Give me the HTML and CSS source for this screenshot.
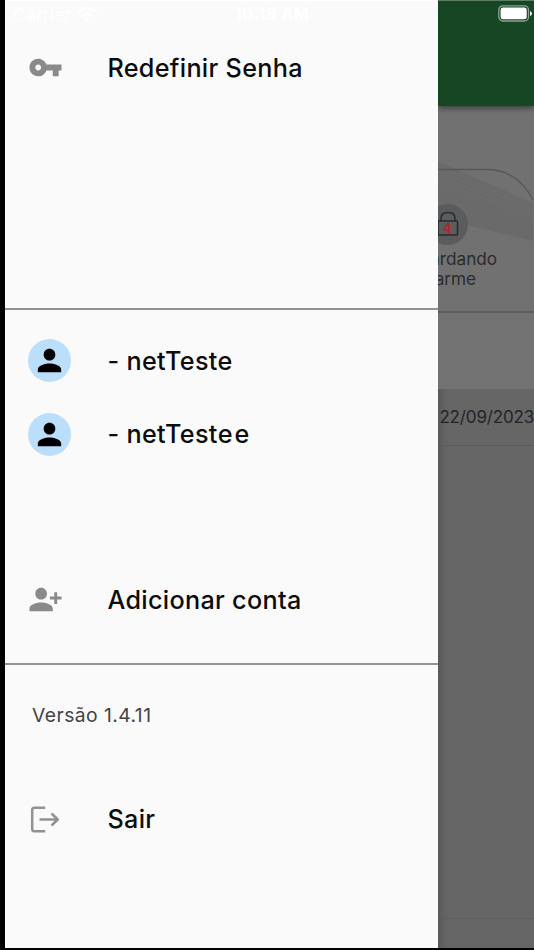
FILE: index.html
```html
<!DOCTYPE html>
<html lang="pt-BR">
<head>
    <meta charset="UTF-8">
    <meta name="viewport" content="width=device-width, initial-scale=1.0">
    <title>Menu</title>
    <link rel="stylesheet" href="styles.css">
</head>
<body>
    <div class="screen">
        <!-- Side menu -->
        <nav class="drawer">
            <div class="status">
                <span class="carrier">Carrier</span>
                <svg class="wifi" viewBox="0 0 20 14"><path d="M0 4Q10-4 20 4L18 6Q10 0 2 6ZM4 8Q10 3 16 8L14 10Q10 7 6 10ZM7.500 11.500Q10 9.500 12.500 11.500L10 14Z"/></svg>
                <span class="clock">10:18 AM</span>
            </div>
            <section class="group group-top">
                <a class="item">
                    <span class="icon"><svg viewBox="0 0 24 24"><path d="M12.650 10C11.830 7.670 9.610 6 7 6c-3.310 0-6 2.690-6 6s2.690 6 6 6c2.610 0 4.830-1.670 5.650-4H17v4h4v-4h2v-4H12.650zM7 14c-1.100 0-2-.9-2-2s.9-2 2-2 2 .9 2 2-.9 2-2 2z"/></svg></span>
                    <span>Redefinir Senha</span>
                </a>
            </section>
            <section class="group group-accounts">
                <a class="item">
                    <span class="avatar"><svg viewBox="0 0 24 24"><path d="M12 12c2.210 0 4-1.790 4-4s-1.790-4-4-4-4 1.790-4 4 1.790 4 4 4zm0 2c-2.670 0-8 1.340-8 4v2h16v-2c0-2.660-5.330-4-8-4z"/></svg></span>
                    <span>- netTeste</span>
                </a>
                <a class="item">
                    <span class="avatar"><svg viewBox="0 0 24 24"><path d="M12 12c2.210 0 4-1.790 4-4s-1.790-4-4-4-4 1.790-4 4 1.790 4 4 4zm0 2c-2.670 0-8 1.340-8 4v2h16v-2c0-2.660-5.330-4-8-4z"/></svg></span>
                    <span>- netTest<span class="wide">e</span>e</span>
                </a>
                <a class="item add">
                    <span class="icon"><svg viewBox="0 0 24 24"><path d="M13 8c0-2.210-1.790-4-4-4S5 5.790 5 8s1.790 4 4 4 4-1.790 4-4zm2 2v2h3v3h2v-3h3v-2h-3V7h-2v3h-3zM1 18v2h16v-2c0-2.660-5.330-4-8-4s-8 1.340-8 4z"/></svg></span>
                    <span>Adicionar conta</span>
                </a>
            </section>
            <section class="group group-bottom">
                <p class="version">Versão 1.4.11</p>
                <a class="item">
                    <span class="icon"><svg class="exit" viewBox="0 0 35 35"><path d="M17.200 5.700H6.500Q4.200 5.700 4.200 8V27Q4.200 29.300 6.500 29.300H17.200M11.500 17.500H29.500M23.500 11.500L29.800 17.500L23.500 23.500"/></svg></span>
                    <span>Sair</span>
                </a>
            </section>
        </nav>

        <!-- Dimmed page behind the menu -->
        <main class="page">
            <header class="appbar">
                <svg class="battery" viewBox="0 0 35 17"><rect class="shell" x="0.800" y="0.800" width="29.700" height="15.200" rx="4"/><rect class="charge" x="2.600" y="2.600" width="26.100" height="11.600" rx="2.500"/><path class="charge" d="M32 6Q34 7 34 8.500Q34 10 32 11Z"/></svg>
            </header>
            <div class="summary">
                <svg class="waves" viewBox="0 0 95 90"><path class="fan" d="M0 1L95 43V81L0 58Z"/><path class="ray" d="M0 1L95 43M0 6L95 46M0 11L95 49M0 16L95 53M0 21L95 57"/><path class="outline" d="M0 9.500H48Q80 9.500 95 40"/></svg>
                <span class="badge"><svg viewBox="0 0 22 26"><path d="M4 10V7Q4 1.500 11 1.500T18 7V10M1.500 10H20Q20.500 10 20.500 11V23Q20.500 24 20 24H1.500Q1 24 1 23V11Q1 10 1.500 10Z"/><text x="10.300" y="21.500">4</text></svg></span>
                <p class="label">Aguardando<br>Alarme</p>
            </div>
            <div class="filters"></div>
            <div class="row">22/09/2023</div>
            <div class="list"></div>
            <footer class="footer"></footer>
        </main>
    </div>
</body>
</html>
```
FILE: styles.css
```css
* {
    box-sizing: border-box;
}
body {
    margin: 0;
    background: #000;
    font-family: Inter, "Liberation Sans", sans-serif;
    overflow: hidden;
}
p {
    margin: 0;
}
.screen {
    display: flex;
    height: 950px;
    padding: 0 0 2px 4.5px;
}
/* Drawer */
.drawer {
    display: flex;
    flex-direction: column;
    flex: 0 0 433.9px;
    background: #fafafa;
    border-top: 1px solid #fff;
}
.status {
    display: flex;
    align-items: center;
    height: 26px;
    padding-left: 9px;
    color: #fff;
    font-size: 17.5px;
}
.carrier {
    width: 63px;
}
.wifi {
    width: 20px;
    height: 14px;
    fill: #fff;
}
.clock {
    margin-left: 138.5px;
    font-size: 17px;
    font-weight: 600;
}
.group {
    border-bottom: 2px solid #929292;
}
.group-top {
    height: 282.5px;
    padding-top: 4px;
}
.group-accounts {
    height: 355.5px;
    padding-top: 14.5px;
}
.group-bottom {
    border: 0;
    padding-top: 36px;
}
.item {
    display: flex;
    align-items: center;
    height: 73.5px;
    padding-left: 23px;
    color: #0c0c0c;
    font-size: 25.2px;
    font-weight: 500;
    letter-spacing: 0.3px;
    white-space: nowrap;
}
.wide {
    letter-spacing: 2px;
}
.icon,
.avatar {
    flex: none;
    margin-right: 37px;
    width: 43px;
    height: 43px;
    display: flex;
    align-items: center;
}
.icon svg,
.avatar svg {
    width: 35px;
    height: 35px;
    fill: #8a8a8a;
}
.avatar {
    justify-content: center;
    border-radius: 50%;
    background: #bbdefb;
}
.avatar svg {
    fill: #000;
}
.icon .exit {
    fill: none;
    stroke: #929292;
    stroke-width: 2.5;
    stroke-linejoin: round;
}
.add {
    margin-top: 92px;
}
.version {
    padding-left: 27.5px;
    color: #444;
    font-size: 19.3px;
    line-height: 28px;
    letter-spacing: 0.45px;
}
.group-bottom .item {
    margin-top: 53.5px;
}
/* Page */
.page {
    display: flex;
    flex-direction: column;
    flex: 1;
    min-width: 0;
    overflow: hidden;
    background: #666;
    color: #242424;
    box-shadow: inset 8px 0 10px -6px rgba(0, 0, 0, 0.2);
}
.appbar {
    display: flex;
    justify-content: flex-end;
    height: 106px;
    flex: none;
    padding: 4px 1px;
    background: #174625;
    border-top: 1px solid #5c7d66;
    box-shadow: 0 2px 6px rgba(0, 0, 0, 0.5);
    z-index: 1;
}
.battery {
    width: 35px;
    height: 17px;
}
.shell {
    fill: none;
    stroke: #8aa292;
    stroke-width: 1.3;
}
.charge {
    fill: #fff;
}
.summary {
    position: relative;
    height: 207px;
    flex: none;
    padding-top: 97.5px;
    background: #717171;
    border-bottom: 2px solid #5c5c5c;
}
.waves {
    position: absolute;
    top: 54px;
    left: 0;
    width: 95px;
    height: 90px;
    overflow: visible;
}
.fan {
    fill: #6a6a6a;
}
.ray {
    fill: none;
    stroke: #727272;
    stroke-width: 0.6;
}
.outline {
    fill: none;
    stroke: #585858;
    stroke-width: 1.3;
}
.badge {
    position: relative;
    display: flex;
    align-items: center;
    justify-content: center;
    width: 41px;
    height: 41px;
    margin-left: -11px;
    border-radius: 50%;
    background: #5a5c5d;
}
.badge svg {
    width: 22px;
    height: 26px;
    fill: none;
    stroke: #272b2d;
    stroke-width: 1.5;
}
.badge text {
    fill: #b3262e;
    stroke: none;
    font-size: 13px;
    font-weight: 700;
    text-anchor: middle;
}
.label {
    position: relative;
    width: 110px;
    margin: 4.5px 0 0 -46px;
    color: #2c2c2c;
    font-size: 17.2px;
    line-height: 20px;
    text-align: center;
}
.filters {
    height: 76px;
    flex: none;
    background: #727272;
}
.row {
    height: 57px;
    flex: none;
    padding-left: 1px;
    border-bottom: 1px solid #5b5b5b;
    font-size: 17px;
    line-height: 56px;
    letter-spacing: -0.15px;
}
.list {
    flex: 1;
}
.footer {
    height: 30px;
    border-top: 1px solid #5e5e5e;
}
```
